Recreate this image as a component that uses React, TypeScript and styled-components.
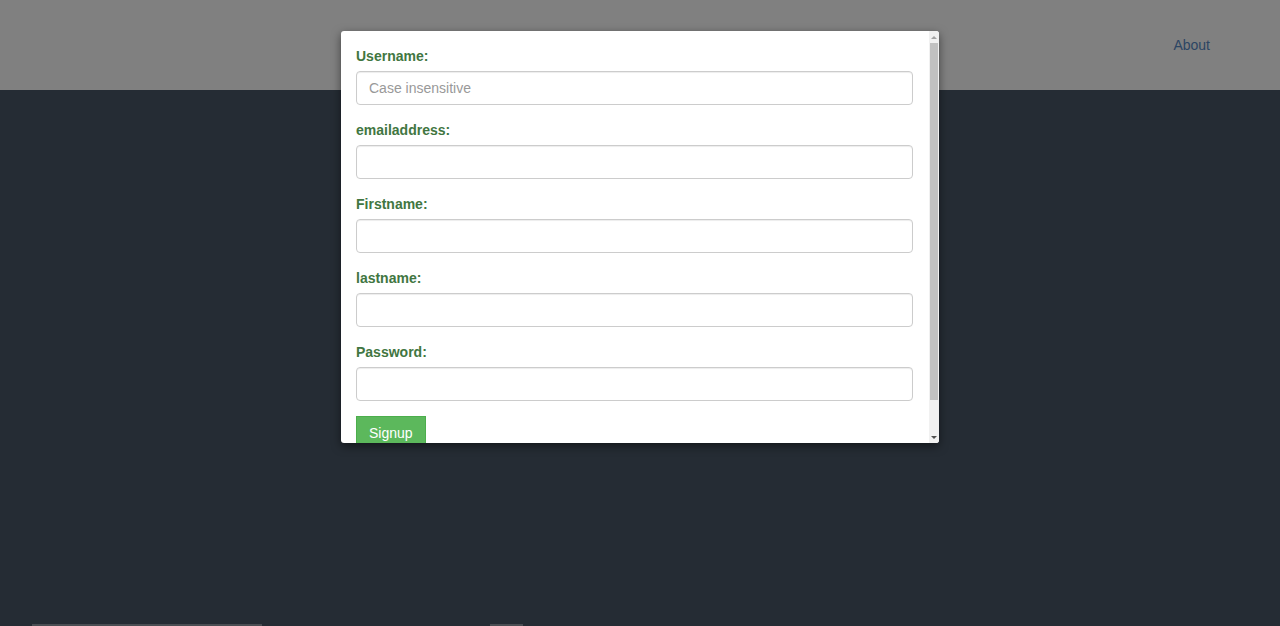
import React from "react";
import styled, { createGlobalStyle } from "styled-components";

const Global = createGlobalStyle`
  html, body { margin: 0; padding: 0; height: 100%; }
  body { background: #252c34; font-family: "Liberation Sans", Arial, sans-serif; font-size: 14px; overflow: hidden; }
  * { box-sizing: border-box; }
`;

const Page = styled.div`
  position: relative;
  height: 626px;
  display: flex;
  flex-direction: column;
`;

const Header = styled.header`
  height: 90px;
  background: #808080;
  display: flex;
  align-items: center;
  justify-content: flex-end;
  padding-right: 70px;
`;

const NavLink = styled.a`
  color: #2c4563;
  font-size: 14px;
  line-height: 20px;
  text-decoration: none;
`;

const Main = styled.main`
  flex: 1;
`;

const Footer = styled.div`
  height: 2px;
  display: flex;
  align-items: flex-end;
`;

const FooterBar = styled.div<{ $left: number; $width: number }>`
  margin-left: ${(p) => p.$left}px;
  width: ${(p) => p.$width}px;
  height: 2px;
  background: #4a4e53;
`;

const Modal = styled.div`
  position: absolute;
  left: 341px;
  top: 31px;
  width: 598px;
  height: 412px;
  background: #fff;
  border-radius: 3px;
  box-shadow: 0 3px 10px rgba(0, 0, 0, 0.5);
  display: flex;
  overflow: hidden;
`;

const Content = styled.form`
  flex: 1;
  padding: 15px 16px 0 15px;
  overflow: hidden;
`;

const Group = styled.div`
  margin-bottom: 15px;
`;

const Label = styled.label`
  display: block;
  margin-bottom: 5px;
  font-weight: bold;
  color: #417641;
  font-size: 14px;
  line-height: 20px;
`;

const Input = styled.input`
  display: block;
  width: 100%;
  height: 34px;
  padding: 6px 12px;
  font-family: "Liberation Sans", Arial, sans-serif;
  font-size: 14px;
  color: #555;
  border: 1px solid #ccc;
  border-radius: 4px;
  box-shadow: inset 0 1px 1px rgba(0, 0, 0, 0.075);
  outline: none;
  &::placeholder { color: #999; }
`;

const Button = styled.button`
  display: inline-block;
  height: 34px;
  padding: 6px 12px;
  font-family: "Liberation Sans", Arial, sans-serif;
  font-size: 14px;
  line-height: 20px;
  color: #fff;
  background: #5cb85c;
  border: 1px solid #4cae4c;
  border-radius: 0;
`;

const Scrollbar = styled.div`
  width: 10px;
  background: #f1f1f1;
  display: flex;
  flex-direction: column;
  align-items: center;
`;

const Arrow = styled.div<{ $down?: boolean }>`
  height: 12px;
  width: 10px;
  display: flex;
  align-items: center;
  justify-content: center;
  &::before {
    content: "";
    width: 0;
    height: 0;
    border-left: 3px solid transparent;
    border-right: 3px solid transparent;
    ${(p) =>
      p.$down
        ? "border-top: 3px solid #505050;"
        : "border-bottom: 3px solid #a3a3a3;"}
  }
`;

const Thumb = styled.div`
  width: 8px;
  height: 357px;
  background: #c1c1c1;
`;

const Spacer = styled.div`
  flex: 1;
`;

const fields = [
  { label: "Username:", placeholder: "Case insensitive", type: "text" },
  { label: "emailaddress:", placeholder: "", type: "email" },
  { label: "Firstname:", placeholder: "", type: "text" },
  { label: "lastname:", placeholder: "", type: "text" },
  { label: "Password:", placeholder: "", type: "password" },
];

export default function App() {
  return (
    <>
      <Global />
      <Page>
        <Header>
          <NavLink href="#">About</NavLink>
        </Header>
        <Main />
        <Footer>
          <FooterBar $left={32} $width={230} />
          <FooterBar $left={228} $width={33} />
        </Footer>
        <Modal>
          <Content onSubmit={(e) => e.preventDefault()}>
            {fields.map((f) => (
              <Group key={f.label}>
                <Label>{f.label}</Label>
                <Input type={f.type} placeholder={f.placeholder} />
              </Group>
            ))}
            <Button type="submit">Signup</Button>
          </Content>
          <Scrollbar>
            <Arrow />
            <Thumb />
            <Spacer />
            <Arrow $down />
          </Scrollbar>
        </Modal>
      </Page>
    </>
  );
}
